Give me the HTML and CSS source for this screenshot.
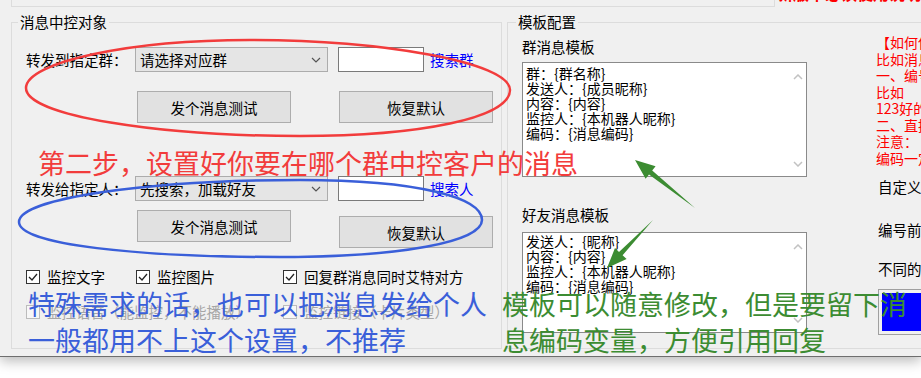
FILE: index.html
```html
<!DOCTYPE html>
<html lang="zh-CN">
<head>
    <meta charset="UTF-8">
    <title>消息中控设置</title>
    <link rel="stylesheet" href="styles.css">
</head>
<body>

    <div class="window">
        <!-- bottom edge of the group above -->
        <div class="top-strip">
            <div class="prev-group"></div>
            <div class="top-note">新版本必读使用说明</div>
        </div>

        <div class="main">
            <!-- 消息中控对象 -->
            <fieldset class="group group-left">
                <legend>消息中控对象</legend>
                <div class="group-body">
                    <div class="form-row row-first">
                        <label class="field-label">转发到指定群：</label>
                        <div class="combo">
                            <span>请选择对应群</span>
                            <svg width="10" height="6" viewBox="0 0 10 6"><polyline points="1,1 5,5 9,1" fill="none" stroke="#555" stroke-width="1.2"/></svg>
                        </div>
                        <input class="search-input" type="text">
                        <a class="search-link" href="#">搜索群</a>
                    </div>
                    <div class="btn-row">
                        <button class="btn">发个消息测试</button>
                        <button class="btn">恢复默认</button>
                    </div>

                    <div class="form-row row-second">
                        <label class="field-label">转发给指定人：</label>
                        <div class="combo">
                            <span>先搜索，加载好友</span>
                            <svg width="10" height="6" viewBox="0 0 10 6"><polyline points="1,1 5,5 9,1" fill="none" stroke="#555" stroke-width="1.2"/></svg>
                        </div>
                        <input class="search-input" type="text">
                        <a class="search-link" href="#">搜索人</a>
                    </div>
                    <div class="btn-row btn-row-second">
                        <button class="btn">发个消息测试</button>
                        <button class="btn btn-low">恢复默认</button>
                    </div>

                    <div class="check-row check-row-first">
                        <div class="check"><span class="check-box"><svg width="12" height="12" viewBox="0 0 12 12"><polyline points="2,6 5,9 10,3" fill="none" stroke="#222" stroke-width="1.3"/></svg></span>监控文字</div>
                        <div class="check"><span class="check-box"><svg width="12" height="12" viewBox="0 0 12 12"><polyline points="2,6 5,9 10,3" fill="none" stroke="#222" stroke-width="1.3"/></svg></span>监控图片</div>
                        <div class="check"><span class="check-box"><svg width="12" height="12" viewBox="0 0 12 12"><polyline points="2,6 5,9 10,3" fill="none" stroke="#222" stroke-width="1.3"/></svg></span>回复群消息同时艾特对方</div>
                    </div>
                    <div class="check-row check-row-second">
                        <div class="check"><span class="check-box check-box-off"></span>监控语音（能监控，不能播放）</div>
                        <div class="check"><span class="check-box check-box-off"></span>监控链接（卡片类型）</div>
                    </div>
                </div>
            </fieldset>

            <!-- 模板配置 -->
            <fieldset class="group group-right">
                <legend>模板配置</legend>
                <div class="template-body">
                    <div class="template-col">
                        <div class="tpl-label">群消息模板</div>
                        <div class="textbox textbox-group">
                            <div class="textbox-text">群：{群名称}
发送人：{成员昵称}
内容：{内容}
监控人：{本机器人昵称}
编码：{消息编码}</div>
                            <div class="scrollbar">
                                <svg width="10" height="6" viewBox="0 0 10 6"><polyline points="1,5 5,1 9,5" fill="none" stroke="#c2c2c2" stroke-width="1.5"/></svg>
                                <svg width="10" height="6" viewBox="0 0 10 6"><polyline points="1,1 5,5 9,1" fill="none" stroke="#c2c2c2" stroke-width="1.5"/></svg>
                            </div>
                        </div>

                        <div class="tpl-label tpl-label-friend">好友消息模板</div>
                        <div class="textbox textbox-friend">
                            <div class="textbox-text">发送人：{昵称}
内容：{内容}
监控人：{本机器人昵称}
编码：{消息编码}</div>
                            <div class="scrollbar">
                                <svg width="10" height="6" viewBox="0 0 10 6"><polyline points="1,5 5,1 9,5" fill="none" stroke="#c2c2c2" stroke-width="1.5"/></svg>
                                <svg width="10" height="6" viewBox="0 0 10 6"><polyline points="1,1 5,5 9,1" fill="none" stroke="#c2c2c2" stroke-width="1.5"/></svg>
                            </div>
                        </div>
                    </div>

                    <div class="help-col">
                        <div class="help-red">
                            <div>【如何使用消息编码】</div>
                            <div>比如消息编码为123</div>
                            <div>一、编号前缀加编码</div>
                            <div>比如</div>
                            <div>123好的，收到了</div>
                            <div>二、直接引用回复</div>
                            <div>注意：</div>
                            <div>编码一定要保留</div>
                        </div>
                        <div class="help-line help-custom">自定义编号前缀</div>
                        <div class="help-line help-prefix">编号前缀长度</div>
                        <div class="help-line help-diff">不同的消息颜色</div>
                        <div class="color-box"><div class="color-fill"></div></div>
                    </div>
                </div>
            </fieldset>
        </div>

        <!-- annotations drawn over the dialog -->
        <div class="marks-layer">
            <svg class="marks" width="921" height="357" viewBox="0 0 921 357">
                <path d="M26 88 C26 62 130 40 250 40 C380 40 510 62 510 90 C510 118 420 136 300 136 C160 136 26 116 26 88 Z" fill="none" stroke="#f23c3c" stroke-width="2.5"/>
                <path d="M19 222 C19 198 150 180 300 180 C420 180 482 198 482 220 C482 242 400 257 280 257 C140 257 19 245 19 222 Z" fill="none" stroke="#3a5fd9" stroke-width="2.5"/>
                <polygon points="695,208 652.2,170.5 655.6,166.3 635,160 645.6,178.7 649,174.5" fill="#3c8c32"/>
                <polygon points="653,220 622.6,255.3 626.6,259.1 607,268 615,248.1 619,251.9" fill="#3c8c32"/>
            </svg>
            <div class="note note-red">第二步，设置好你要在哪个群中控客户的消息</div>
            <div class="note note-blue">
                <div>特殊需求的话，也可以把消息发给个人</div>
                <div>一般都用不上这个设置，不推荐</div>
            </div>
            <div class="note note-green">
                <div>模板可以随意修改，但是要留下消</div>
                <div>息编码变量，方便引用回复</div>
            </div>
        </div>
    </div>

</body>
</html>
```

FILE: styles.css
```css
* {
    box-sizing: border-box;
}

html,
body {
    margin: 0;
    padding: 0;
}

body {
    width: 921px;
    height: 378px;
    overflow: hidden;
    background: #fff;
    font-family: "Noto Sans CJK SC", sans-serif;
    font-size: 14.5px;
    color: #000;
}

.window {
    position: relative;
    width: 921px;
    height: 357px;
    background: #f0f0f0;
    border-bottom: 1px solid #6e6e6e;
    box-shadow: 0 4px 12px rgba(0, 0, 0, 0.28);
    overflow: hidden;
}

/* top strip */
.top-strip {
    display: flex;
    align-items: flex-end;
    height: 7px;
    padding-left: 11px;
    overflow: hidden;
}

.prev-group {
    width: 837px;
    height: 7px;
    border: 1px solid #dcdcdc;
    border-top: none;
}

.top-note {
    margin: 0 0 6px 2px;
    color: #ff0000;
    font-weight: bold;
    font-size: 16px;
    line-height: 16px;
    white-space: nowrap;
}

/* group boxes */
.main {
    display: flex;
    gap: 5px;
    margin-top: 6px;
    padding-left: 11px;
}

.group {
    margin: 0;
    padding: 0;
    height: 336px;
    min-width: 0;
    border: 1px solid #dcdcdc;
}

.group legend {
    margin-left: 6px;
    padding: 0 2px;
    font-size: 14.5px;
    line-height: 18px;
}

.group-left {
    width: 491px;
    flex: none;
}

.group-body {
    padding: 16px 0 0 14px;
}

.form-row {
    display: flex;
    align-items: center;
    height: 25px;
}

.row-second {
    margin-top: 53px;
}

.field-label {
    width: 109px;
    white-space: nowrap;
}

.combo {
    display: flex;
    align-items: center;
    justify-content: space-between;
    width: 193px;
    height: 25px;
    padding: 0 6px 0 4px;
    background: #e5e5e5;
    border: 1px solid #acacac;
}

.search-input {
    width: 86px;
    height: 25px;
    margin: 0 0 0 10px;
    padding: 0;
    background: #fff;
    border: 1px solid #7a7a7a;
}

.search-link {
    margin-left: 6px;
    color: #0000ff;
    text-decoration: none;
}

.btn-row {
    display: flex;
    align-items: flex-start;
    gap: 48px;
    margin-top: 19px;
    padding-left: 111px;
}

.btn-row-second {
    margin-top: 9px;
}

.btn {
    width: 154px;
    height: 32px;
    padding: 0;
    background: #e1e1e1;
    border: 1px solid #adadad;
    font: inherit;
    color: #000;
}

.btn-low {
    margin-top: 6px;
}

/* checkboxes */
.check-row {
    display: grid;
    grid-template-columns: 110px 147px auto;
    height: 18px;
    line-height: 18px;
}

.check-row-first {
    margin-top: 20px;
}

.check-row-second {
    grid-template-columns: 257px auto;
    margin-top: 17px;
    color: #a6a6a6;
}

.check {
    display: flex;
    align-items: center;
    gap: 7px;
    white-space: nowrap;
}

.check-box {
    display: flex;
    align-items: center;
    justify-content: center;
    flex: none;
    width: 14px;
    height: 14px;
    background: #fff;
    border: 1px solid #333;
}

.check-box-off {
    border-color: #bcbcbc;
    background: #f7f7f7;
}

/* template group */
.group-right {
    width: 560px;
    flex: none;
}

.group-right legend {
    margin-left: 8px;
}

.template-body {
    display: flex;
    padding-left: 14px;
}

.template-col {
    width: 285px;
    flex: none;
    padding-top: 7px;
}

.tpl-label {
    line-height: 18px;
}

.tpl-label-friend {
    margin-top: 29px;
}

.textbox {
    display: flex;
    background: #fff;
    border: 1px solid #8a8a8a;
}

.textbox-group {
    height: 115px;
    margin-top: 6px;
}

.textbox-friend {
    height: 101px;
    margin-top: 8px;
}

.textbox-text {
    flex: 1;
    padding: 3px 0 0 3px;
    font-size: 14px;
    line-height: 15px;
    white-space: pre;
    overflow: hidden;
}

.textbox-friend .textbox-text {
    padding-top: 1px;
}

.scrollbar {
    display: flex;
    flex-direction: column;
    justify-content: space-between;
    align-items: center;
    width: 17px;
    padding: 11px 0 9px;
}

.help-col {
    margin-left: 69px;
    padding-top: 3px;
    white-space: nowrap;
}

.help-red {
    color: #ff0000;
    font-size: 14px;
    line-height: 16.5px;
}

.help-line {
    margin-left: 2px;
    line-height: 18px;
}

.help-custom {
    margin-top: 12px;
}

.help-prefix {
    margin-top: 25px;
}

.help-diff {
    margin-top: 21px;
}

.color-box {
    width: 80px;
    height: 46px;
    margin: 11px 0 0 2px;
    padding: 3px;
    background: #f0f0f0;
    border: 1px solid #a0a0a0;
}

.color-fill {
    height: 100%;
    background: #0000ff;
}

/* annotations */
.marks-layer {
    position: absolute;
    left: 0;
    top: 0;
    width: 921px;
    height: 357px;
    pointer-events: none;
}

.marks {
    position: absolute;
    left: 0;
    top: 0;
}

.note {
    position: absolute;
    font-size: 27px;
    white-space: nowrap;
}

.note-red {
    left: 38px;
    top: 148px;
    line-height: 30px;
    color: #f23c3c;
}

.note-blue {
    left: 28px;
    top: 286px;
    line-height: 36px;
    color: #3a5fd9;
}

.note-green {
    left: 502px;
    top: 286px;
    line-height: 36px;
    color: #3c8c32;
}
```
